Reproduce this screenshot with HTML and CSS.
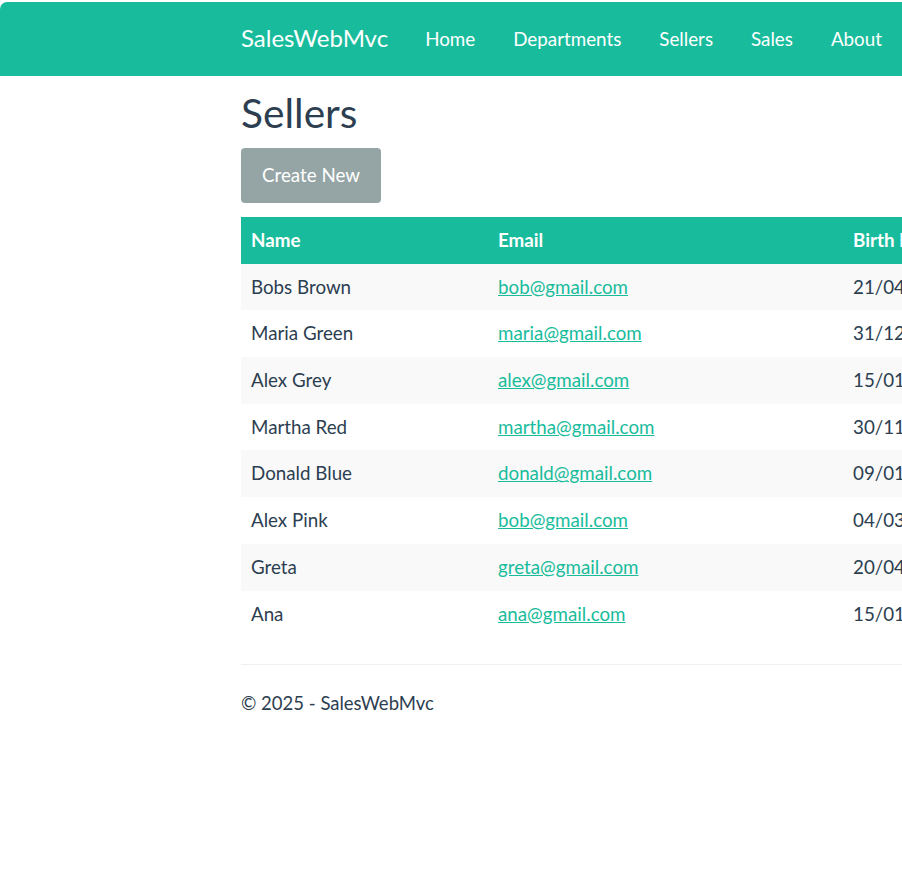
FILE: index.html
```html
<!DOCTYPE html>
<html lang="en">
<head>
<meta charset="utf-8">
<title>Sellers - SalesWebMvc</title>
<link rel="stylesheet" href="styles.css">
</head>
<body>
<header class="navbar">
  <div class="container nav-inner">
    <a class="brand" href="#">SalesWebMvc</a>
    <nav class="nav-links">
      <a href="#">Home</a>
      <a href="#">Departments</a>
      <a href="#">Sellers</a>
      <a href="#">Sales</a>
      <a href="#">About</a>
    </nav>
  </div>
</header>
<main class="container">
  <h1 class="title">Sellers</h1>
  <a class="btn" href="#">Create New</a>
  <table class="table">
    <thead>
      <tr><th class="c-name">Name</th><th class="c-email">Email</th><th class="c-birth">Birth Date</th><th>Base Salary</th></tr>
    </thead>
    <tbody>
      <tr><td>Bobs Brown</td><td><a href="#">bob@gmail.com</a></td><td>21/04/1998</td><td>1000.00</td></tr>
      <tr><td>Maria Green</td><td><a href="#">maria@gmail.com</a></td><td>31/12/1979</td><td>3500.00</td></tr>
      <tr><td>Alex Grey</td><td><a href="#">alex@gmail.com</a></td><td>15/01/1988</td><td>2200.00</td></tr>
      <tr><td>Martha Red</td><td><a href="#">martha@gmail.com</a></td><td>30/11/1993</td><td>3000.00</td></tr>
      <tr><td>Donald Blue</td><td><a href="#">donald@gmail.com</a></td><td>09/01/2000</td><td>4000.00</td></tr>
      <tr><td>Alex Pink</td><td><a href="#">bob@gmail.com</a></td><td>04/03/1997</td><td>3000.00</td></tr>
      <tr><td>Greta</td><td><a href="#">greta@gmail.com</a></td><td>20/04/1999</td><td>2500.00</td></tr>
      <tr><td>Ana</td><td><a href="#">ana@gmail.com</a></td><td>15/01/2001</td><td>2800.00</td></tr>
    </tbody>
  </table>
  <footer class="footer">
    <p>&copy; 2025 - SalesWebMvc</p>
  </footer>
</main>
</body>
</html>
```
FILE: styles.css
```css
html, body {
  margin: 0;
  padding: 0;
  overflow: hidden;
}
body {
  font-family: Lato, "Open Sans", "Liberation Sans", sans-serif;
  font-size: 18.75px;
  line-height: 27px;
  color: #2c3e50;
  background: #fff;
}
.container {
  padding-left: 241px;
  width: 1200px;
  box-sizing: content-box;
}
.navbar {
  margin-top: 2px;
  height: 74px;
  background: #18bc9c;
  border-top-left-radius: 7px;
}
.nav-inner {
  display: flex;
  align-items: center;
  height: 72px;
  padding-bottom: 2px;
}
.brand {
  color: #fff;
  text-decoration: none;
  font-size: 24px;
  margin-right: 37px;
  padding-bottom: 1px;
}
.nav-links {
  display: flex;
  gap: 38px;
}
.nav-links a {
  color: #fff;
  text-decoration: none;
  font-size: 18.8px;
}
.title {
  margin: 13px 0 11px;
  font-size: 40.7px;
  line-height: 48px;
  font-weight: 400;
}
.btn {
  display: inline-block;
  box-sizing: border-box;
  height: 55px;
  background: #95a5a6;
  color: #fff;
  text-decoration: none;
  padding: 13px 21px 15px;
  border-radius: 4px;
  line-height: 27px;
  vertical-align: top;
}
.table {
  margin-top: 14px;
  border-collapse: collapse;
  width: 1100px;
}
.table th, .table td {
  text-align: left;
  padding: 9px 10px 10.7px;
  line-height: 27px;
}
.table th {
  background: #18bc9c;
  color: #fff;
  font-weight: 700;
}
.c-name { width: 227px; }
.c-email { width: 335px; }
.c-birth { width: 200px; }
.table tbody tr:nth-child(odd) td {
  background: #f9f9f9;
}
.table a {
  color: #18bc9c;
  text-decoration: underline;
}
.footer {
  margin-top: 27px;
  border-top: 1px solid #ecf0f1;
  width: 1100px;
}
.footer p {
  margin: 25px 0 0;
  font-size: 18.5px;
}
```
